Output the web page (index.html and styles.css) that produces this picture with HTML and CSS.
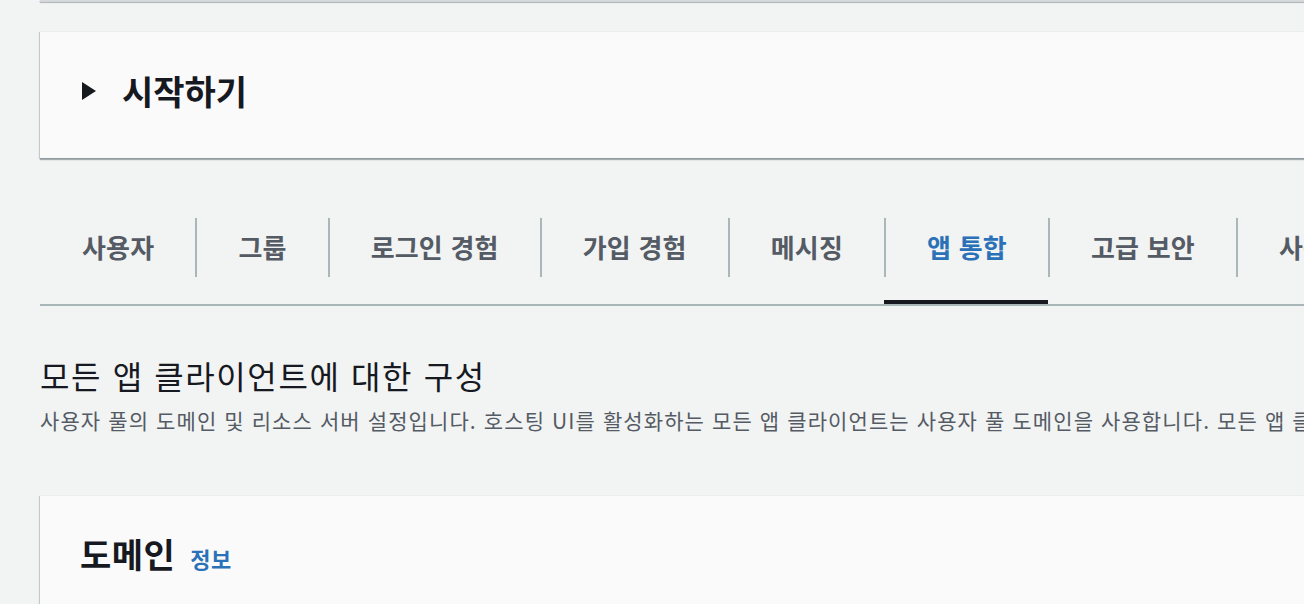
FILE: index.html
```html
<!DOCTYPE html>
<html lang="ko">
<head>
  <meta charset="UTF-8" />
  <meta name="viewport" content="width=device-width, initial-scale=1.0"/>
  <title>앱 통합</title>
  <link rel="stylesheet" href="styles.css">
</head>
<body>
  <main class="page">
    <div class="card card-prev"></div>

    <section class="card expander">
      <svg class="caret" width="16" height="20" viewBox="0 0 16 20">
        <polygon points="1,1 15,10 1,19" fill="#16191f" />
      </svg>
      <h2>시작하기</h2>
    </section>

    <ul class="tabs">
      <li class="tab"><span class="tab-label">사용자</span></li>
      <li class="tab"><span class="tab-label">그룹</span></li>
      <li class="tab"><span class="tab-label">로그인 경험</span></li>
      <li class="tab"><span class="tab-label">가입 경험</span></li>
      <li class="tab"><span class="tab-label">메시징</span></li>
      <li class="tab active"><span class="tab-label">앱 통합</span></li>
      <li class="tab"><span class="tab-label">고급 보안</span></li>
      <li class="tab"><span class="tab-label">사용자 풀 속성</span></li>
    </ul>

    <header class="section-head">
      <h1>모든 앱 클라이언트에 대한 구성</h1>
      <p>사용자 풀의 도메인 및 리소스 서버 설정입니다. 호스팅 UI를 활성화하는 모든 앱 클라이언트는 사용자 풀 도메인을 사용합니다. 모든 앱 클라이언트에 적용됩니다.</p>
    </header>

    <section class="card domain">
      <div class="card-title">
        <h2>도메인</h2>
        <a class="info">정보</a>
      </div>
      <p class="card-desc">도메인을 구성하여 사용자 풀에서 호스팅되는 로그인 및 가입 페이지를 사용자에게 제공하십시오. 사용자 지정 도메인 또는 Amazon Cognito 도메인을 사용할 수 있습니다.</p>
    </section>
  </main>
</body>
</html>
```

FILE: styles.css
```css
* {
  box-sizing: border-box;
  font-family: "Noto Sans CJK KR", "Noto Sans", sans-serif;
}

html, body {
  margin: 0;
  overflow: hidden;
}

body {
  background: #f2f3f3;
  color: #16191f;
}

.page {
  width: 1500px;
  padding-left: 40px;
}

.card {
  background: #fafafa;
  border-top: 1px solid #eaeded;
  box-shadow: 0 2px 1px 0 rgba(0, 28, 36, 0.3),
              -1px 1px 1px 0 rgba(0, 28, 36, 0.15);
}

.card-prev {
  height: 1px;
  border-top: none;
  border-bottom: 1px solid #d5dbdb;
}

.expander {
  margin-top: 30px;
  height: 127px;
  display: flex;
  align-items: center;
  padding-left: 41px;
  padding-bottom: 8px;
}

.caret {
  margin-right: 25px;
}

h1, h2, p {
  margin: 0;
}

.expander h2 {
  font-size: 34px;
  font-weight: 700;
  line-height: 44px;
}

/* tabs */
.tabs {
  list-style: none;
  margin: 60px 0 0;
  padding: 0;
  display: flex;
  border-bottom: 2px solid #aab7b8;
}

.tab {
  padding-bottom: 23px;
  border-bottom: 4px solid transparent;
  white-space: nowrap;
}

.tab-label {
  display: flex;
  align-items: center;
  height: 59px;
  padding: 0 41px 3px 42px;
  font-size: 26px;
  font-weight: 700;
  letter-spacing: 0.2px;
  color: #545b64;
}

.tab + .tab .tab-label {
  border-left: 2px solid #aab7b8;
  padding-left: 41px;
}

.tab.active {
  border-bottom-color: #16191f;
}

.tab.active .tab-label {
  color: #2a71b8;
}

/* section header */
.section-head {
  margin-top: 47px;
}

.section-head h1 {
  font-size: 32px;
  font-weight: 400;
  line-height: 44px;
  letter-spacing: 1.6px;
  white-space: nowrap;
}

.section-head p {
  margin-top: 9px;
  font-size: 21px;
  line-height: 28px;
  letter-spacing: 1.1px;
  color: #545b64;
  white-space: nowrap;
}

/* domain card */
.domain {
  margin-top: 61px;
  padding: 36px 40px 0;
  height: 200px;
}

.card-title {
  display: flex;
  align-items: baseline;
}

.card-title h2 {
  font-size: 34px;
  font-weight: 700;
  line-height: 44px;
  letter-spacing: 0.5px;
}

.info {
  margin-left: 15px;
  font-size: 22px;
  font-weight: 700;
  letter-spacing: 0.5px;
  color: #2a71b8;
}

.card-desc {
  margin-top: 30px;
  font-size: 21px;
  line-height: 28px;
  letter-spacing: 1.1px;
  color: #545b64;
  white-space: nowrap;
}
```
